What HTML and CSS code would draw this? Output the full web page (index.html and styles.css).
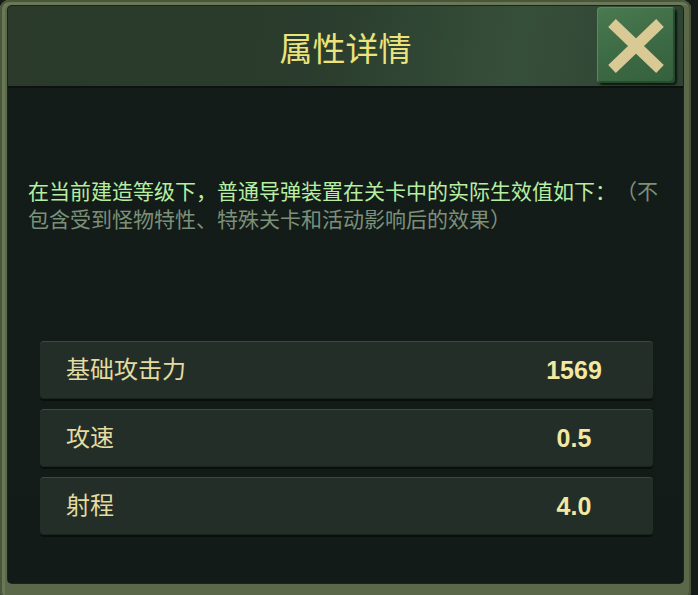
FILE: index.html
```html
<!DOCTYPE html>
<html lang="zh-CN">
<head>
<meta charset="utf-8">
<link rel="stylesheet" href="styles.css">
</head>
<body>
<div class="frame">
  <div class="panel">
    <div class="header">
      <div class="title">属性详情</div>
      <div class="close">
        <svg width="78" height="76" viewBox="0 0 78 76">
          <path d="M15 16 L63 62 M63 16 L15 62" stroke="#d9c995" stroke-width="11" stroke-linecap="butt" fill="none"/>
        </svg>
      </div>
    </div>
    <div class="content">
      <p class="desc"><span class="hl">在当前建造等级下，普通导弹装置在关卡中的实际生效值如下：</span><span class="note">（不包含受到怪物特性、特殊关卡和活动影响后的效果）</span></p>
      <div class="rows">
        <div class="row"><span class="label">基础攻击力</span><span class="value">1569</span></div>
        <div class="row"><span class="label">攻速</span><span class="value">0.5</span></div>
        <div class="row"><span class="label">射程</span><span class="value">4.0</span></div>
      </div>
    </div>
  </div>
</div>
</body>
</html>
```

FILE: styles.css
```css
html, body {
  margin: 0;
  padding: 0;
  background: #151b17;
  width: 698px;
  height: 595px;
  overflow: hidden;
}
.frame {
  width: 691px;
  height: 600px;
  box-sizing: border-box;
  padding: 6px 8px 17px 8px;
  background: #5b6849;
  border-radius: 9px;
  box-shadow: inset 0 0 0 2px #4a5639, inset 2px 2px 0 3px #6a7857;
  display: flex;
}
.panel {
  flex: 1;
  display: flex;
  flex-direction: column;
  background: #131b18;
  border-radius: 4px;
  box-shadow: 0 0 0 1px #1c2417;
  overflow: hidden;
}
.header {
  height: 80px;
  display: grid;
  grid-template-columns: 1fr auto 1fr;
  align-items: start;
  background: linear-gradient(100deg, #2b3a2a 0%, #2a3c2d 45%, #364f3a 75%, #2d4232 100%);
  border-bottom: 2px solid #0c120e;
}
.title {
  grid-column: 2;
  align-self: center;
  font-family: "Noto Sans CJK SC", sans-serif;
  font-size: 33px;
  line-height: 40px;
  color: #ece37a;
  padding-top: 2px;
}
.close {
  grid-column: 3;
  justify-self: end;
  margin: 1px 8px 0 0;
  width: 78px;
  height: 76px;
  box-sizing: border-box;
  background: linear-gradient(160deg, #4a7a50 0%, #3c6a44 55%, #35603d 100%);
  border-radius: 4px;
  box-shadow: inset 1px 1px 0 #5a8a5e, inset -2px -2px 0 #2a4a30, 2px 2px 2px #0e160f;
  display: flex;
}
.content {
  flex: 1;
  background: linear-gradient(180deg, #141c19 0%, #131b18 100%);
  display: flex;
  flex-direction: column;
}
.desc {
  margin: 88px 20px 0 20px;
  font-family: "Noto Sans CJK SC", sans-serif;
  font-size: 21px;
  line-height: 28px;
  text-spacing-trim: space-all;
}
.hl { color: #b6eea2; }
.note { color: #7c9079; }
.rows {
  margin: 109px 30px 0 32px;
  display: flex;
  flex-direction: column;
  gap: 10px;
}
.row {
  height: 58px;
  box-sizing: border-box;
  display: flex;
  align-items: center;
  padding: 0 19px 0 26px;
  background: #232e28;
  border-radius: 4px;
  border-top: 1px solid #3b4a3f;
  box-shadow: 0 2px 0 #0a0f0c, inset 0 -1px 0 #1b241f;
}
.label {
  flex: 1;
  font-family: "Noto Sans CJK SC", sans-serif;
  font-size: 24px;
  line-height: 24px;
  padding-bottom: 5px;
  color: #e4dba0;
}
.value {
  width: 120px;
  text-align: center;
  font-family: "Liberation Sans", Arial, sans-serif;
  font-weight: bold;
  font-size: 25px;
  color: #f2e8a0;
}
```
